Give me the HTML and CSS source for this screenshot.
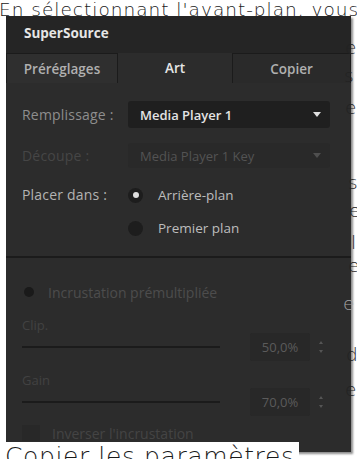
FILE: index.html
```html
<!DOCTYPE html>
<html lang="fr">
<head>
    <meta charset="UTF-8">
    <meta name="viewport" content="width=device-width, initial-scale=1.0">
    <title>SuperSource - Art</title>
    <link rel="stylesheet" href="styles.css">
</head>
<body>
    <div class="page">
        <p class="lead">En sélectionnant l'avant-plan, vous</p>

        <div class="panel">
            <div class="panel-title">SuperSource</div>
            <div class="tabs">
                <div class="tab">Préréglages</div>
                <div class="tab active">Art</div>
                <div class="tab">Copier</div>
            </div>

            <div class="section">
                <div class="row">
                    <span class="label">Remplissage :</span>
                    <div class="select">
                        <span>Media Player 1</span>
                        <span class="caret"></span>
                    </div>
                </div>
                <div class="row disabled">
                    <span class="label">Découpe :</span>
                    <div class="select">
                        <span>Media Player 1 Key</span>
                        <span class="caret"></span>
                    </div>
                </div>
                <div class="row placer">
                    <span class="label">Placer dans :</span>
                    <div class="radios">
                        <label class="radio checked"><span class="dot"></span>Arrière-plan</label>
                        <label class="radio"><span class="dot"></span>Premier plan</label>
                    </div>
                </div>
            </div>

            <div class="section lower">
                <div class="premult"><span class="led"></span>Incrustation prémultipliée</div>

                <div class="field-label">Clip.</div>
                <div class="slider-row">
                    <div class="track"></div>
                    <div class="value">50,0%</div>
                    <div class="spin"><span class="up"></span><span class="down"></span></div>
                </div>

                <div class="field-label">Gain</div>
                <div class="slider-row">
                    <div class="track"></div>
                    <div class="value">70,0%</div>
                    <div class="spin"><span class="up"></span><span class="down"></span></div>
                </div>

                <div class="check"><span class="box"></span>Inverser l'incrustation</div>
            </div>
        </div>

        <h2 class="next">Copier les paramètres</h2>

        <!-- bits of the page text that stick out on the right of the picture -->
        <div class="edge">
            <span style="top: 38px; left: 345px">e</span>
            <span style="top: 66px; left: 344px">s</span>
            <span style="top: 98px; left: 345px">e</span>
            <span style="top: 173px; left: 348px">s</span>
            <span style="top: 201px; left: 349px">e</span>
            <span style="top: 233px; left: 351px">l</span>
            <span style="top: 256px; left: 348px">e</span>
            <span class="faded" style="top: 294px; left: 343px">e</span>
            <span style="top: 345px; left: 346px">d</span>
            <span style="top: 380px; left: 345px">e</span>
        </div>
    </div>
</body>
</html>
```

FILE: styles.css
```css
:root {
    --panel: #2c2c2c;
    --panel-dark: #252525;
    --field: #1f1f1f;
    --line: #1b1b1b;
    --text-dim: #4d4d4d;
    --doc-font: 'DejaVu Sans', 'Open Sans', sans-serif;
}
body {
    margin: 0;
    background: #fff;
    font-family: 'Open Sans', 'Noto Sans', sans-serif;
    color: #1e1e1e;
    overflow: hidden;
}
.page {
    position: relative;
    width: 357px;
    height: 459px;
    overflow: hidden;
}
.lead {
    position: relative;
    z-index: 2;
    margin: 0 0 0 -1px;
    height: 16px;
    font-family: var(--doc-font);
    font-size: 18.5px;
    font-weight: 300;
    letter-spacing: 1px;
    line-height: 20px;
    white-space: nowrap;
    color: #222;
}

/* the screenshot of the panel */
.panel {
    position: relative;
    z-index: 1;
    margin-left: 6px;
    width: 345px;
    height: 436px;
    background: var(--panel);
    box-shadow: 2px 2px 2px rgba(0, 0, 0, 0.45);
    color: #bbb;
    font-size: 13px;
}
.panel-title {
    height: 37px;
    line-height: 34px;
    padding-left: 18px;
    background: var(--panel-dark);
    color: #e6e6e6;
    font-weight: 700;
    font-size: 13.5px;
}
.tabs {
    display: grid;
    grid-template-columns: 112px 114px 119px;
    height: 30px;
}
.tab {
    display: flex;
    align-items: center;
    justify-content: center;
    background: #2f2f2f;
    border: 1px solid var(--line);
    border-bottom: none;
    color: #b0b0b0;
    font-weight: 600;
    font-size: 13.5px;
}
.tab.active {
    background: var(--panel);
    border: none;
    color: #e6e6e6;
}
.tab:last-child {
    background: #2a2a2a;
}

.section {
    padding: 18px 21px 0 16px;
}
.row {
    display: grid;
    grid-template-columns: 106px 1fr;
    align-items: center;
    margin-bottom: 15px;
}
.label {
    color: #8e8e8e;
    font-size: 14px;
    letter-spacing: 0.2px;
}
.select {
    display: flex;
    align-items: center;
    justify-content: space-between;
    height: 27px;
    padding: 0 9px 0 12px;
    background: var(--field);
    border-radius: 3px;
    color: #e4e4e4;
    font-weight: 600;
}
.caret {
    width: 0;
    height: 0;
    border-left: 4px solid transparent;
    border-right: 4px solid transparent;
    border-top: 5px solid #e0e0e0;
}
.row.disabled .label {
    color: #464646;
}
.row.disabled .select {
    height: 25px;
    background: #292929;
    color: #535353;
    font-weight: 400;
}
.row.disabled .caret {
    border-top-color: #4f4f4f;
}
.row.placer {
    align-items: start;
    margin-bottom: 16px;
}
.row.placer .label {
    line-height: 24px;
    color: #b3b3b3;
}
.radios {
    display: flex;
    flex-direction: column;
    gap: 9px;
}
.radio {
    display: flex;
    align-items: center;
    gap: 15px;
    height: 24px;
    color: #bdbdbd;
    font-size: 13.5px;
}
.dot {
    display: flex;
    align-items: center;
    justify-content: center;
    width: 15px;
    height: 15px;
    border-radius: 50%;
    background: #1d1d1d;
}
.radio.checked .dot::after {
    content: "";
    width: 6px;
    height: 6px;
    border-radius: 50%;
    background: #dedede;
}

.section.lower {
    border-top: 2px solid var(--line);
    padding: 24px 0 0 16px;
    color: var(--text-dim);
}
.premult {
    display: flex;
    align-items: center;
    gap: 14px;
    height: 20px;
    padding-left: 2px;
    font-size: 14px;
}
.led {
    width: 10px;
    height: 10px;
    border-radius: 50%;
    background: #1a1a1a;
}
.field-label {
    margin-top: 15px;
    height: 16px;
    line-height: 16px;
    color: #424242;
}
.slider-row + .field-label {
    margin-top: 11px;
}
.slider-row {
    display: flex;
    align-items: center;
    height: 28px;
}
.track {
    width: 198px;
    height: 2px;
    background: var(--line);
}
.value {
    margin-left: 30px;
    width: 60px;
    height: 28px;
    line-height: 28px;
    text-align: center;
    background: #282828;
    border-radius: 2px;
    color: #5b5b5b;
}
.spin {
    display: flex;
    flex-direction: column;
    gap: 6px;
    margin-left: 9px;
}
.spin span {
    width: 0;
    height: 0;
    border-left: 2px solid transparent;
    border-right: 2px solid transparent;
}
.spin .up {
    border-bottom: 3px solid #555;
}
.spin .down {
    border-top: 3px solid #555;
}
.check {
    display: flex;
    align-items: center;
    gap: 12px;
    margin-top: 9px;
    height: 16px;
    color: #444;
    font-size: 14px;
}
.box {
    width: 18px;
    height: 16px;
    background: #282828;
}

.next {
    position: relative;
    z-index: 2;
    width: fit-content;
    margin: -10px 0 0 0;
    padding: 0 4px 0 5px;
    background: #fff;
    font-family: var(--doc-font);
    font-size: 25px;
    font-weight: 300;
    letter-spacing: 0.6px;
    line-height: 30px;
    color: #1a1a1a;
    white-space: nowrap;
}

.edge span {
    position: absolute;
    z-index: 3;
    font-family: var(--doc-font);
    font-size: 18.5px;
    font-weight: 300;
    line-height: 20px;
    color: #222;
}
.edge .faded {
    color: #a5a5a5;
}
```
